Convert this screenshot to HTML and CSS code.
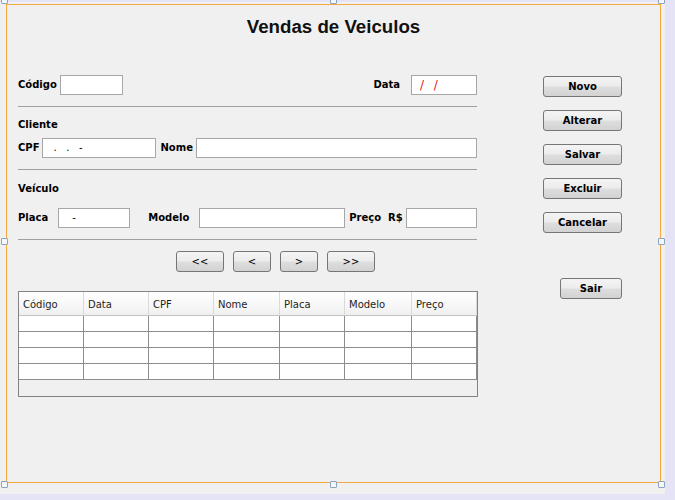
FILE: index.html
```html
<!DOCTYPE html>
<html lang="pt">
<head>
<meta charset="utf-8">
<title>Vendas de Veiculos</title>
<link rel="stylesheet" href="styles.css">
</head>
<body>
<div class="outer">
  <div class="panel">
    <h1 class="title">Vendas de Veiculos</h1>
    <div class="main">
      <div class="left">
        <div class="row spread">
          <div class="group">
            <span class="lbl">Código</span>
            <div class="field w-codigo ml-3"></div>
          </div>
          <div class="group">
            <span class="lbl">Data</span>
            <div class="field w-data ml-11"><span class="mask red">/ /</span></div>
          </div>
        </div>
        <div class="sep"></div>
        <div class="section">Cliente</div>
        <div class="row mt-6">
          <span class="lbl">CPF</span>
          <div class="field w-cpf ml-2"><span class="mask cpf">.&nbsp;&nbsp;&nbsp;.&nbsp;&nbsp;&nbsp;-</span></div>
          <span class="lbl ml-5">Nome</span>
          <div class="field grow ml-3"></div>
        </div>
        <div class="sep"></div>
        <div class="section mt-12">Veículo</div>
        <div class="row mt-12">
          <span class="lbl">Placa</span>
          <div class="field w-placa ml-10"><span class="mask placa">-</span></div>
          <span class="lbl ml-18">Modelo</span>
          <div class="field w-modelo ml-10"></div>
          <span class="lbl ml-4">Preço&nbsp;&nbsp;R$</span>
          <div class="field grow ml-3"></div>
        </div>
        <div class="sep"></div>
        <div class="nav">
          <button class="btn w-48">&lt;&lt;</button>
          <button class="btn w-38">&lt;</button>
          <button class="btn w-38">&gt;</button>
          <button class="btn w-48">&gt;&gt;</button>
        </div>
        <div class="table">
          <div class="grid">
            <div class="th">Código</div>
            <div class="th">Data</div>
            <div class="th">CPF</div>
            <div class="th">Nome</div>
            <div class="th">Placa</div>
            <div class="th">Modelo</div>
            <div class="th">Preço</div>
            <div class="td"></div><div class="td"></div><div class="td"></div><div class="td"></div><div class="td"></div><div class="td"></div><div class="td"></div>
            <div class="td"></div><div class="td"></div><div class="td"></div><div class="td"></div><div class="td"></div><div class="td"></div><div class="td"></div>
            <div class="td"></div><div class="td"></div><div class="td"></div><div class="td"></div><div class="td"></div><div class="td"></div><div class="td"></div>
            <div class="td"></div><div class="td"></div><div class="td"></div><div class="td"></div><div class="td"></div><div class="td"></div><div class="td"></div>
          </div>
        </div>
      </div>
      <div class="right">
        <button class="btn bold side">Novo</button>
        <button class="btn bold side">Alterar</button>
        <button class="btn bold side">Salvar</button>
        <button class="btn bold side">Excluir</button>
        <button class="btn bold side">Cancelar</button>
        <button class="btn bold sair">Sair</button>
      </div>
    </div>
  </div>
</div>
<span class="handle h-tl"></span>
<span class="handle h-tc"></span>
<span class="handle h-tr"></span>
<span class="handle h-ml"></span>
<span class="handle h-mr"></span>
<span class="handle h-bl"></span>
<span class="handle h-bc"></span>
<span class="handle h-br"></span>
</body>
</html>
```
FILE: styles.css
```css
html, body {
  margin: 0;
  padding: 0;
}
body {
  width: 675px;
  height: 500px;
  overflow: hidden;
  position: relative;
  background: #e4e4f6;
  font-family: "DejaVu Sans", "Liberation Sans", sans-serif;
  font-size: 10px;
  color: #000;
}
.outer {
  margin-top: 2px;
  width: 665px;
  height: 492px;
  box-sizing: border-box;
  padding: 2px 0 0 6px;
  background: #f0f0f0;
}
.panel {
  width: 655px;
  height: 479px;
  box-sizing: border-box;
  border: 1px solid #f4a940;
  background: #f0f0f0;
}
.title {
  margin: 0;
  padding-top: 11px;
  height: 22px;
  line-height: 22px;
  text-align: center;
  font-family: "Liberation Sans", Arial, sans-serif;
  font-weight: bold;
  font-size: 18.7px;
  color: #111;
}
.main {
  display: flex;
  margin-top: 37px;
  padding-left: 11px;
}
.left {
  width: 459px;
}
.right {
  margin-left: 66px;
  padding-top: 1px;
  display: flex;
  flex-direction: column;
  gap: 13px;
  align-items: flex-start;
}
.row {
  display: flex;
  align-items: center;
  height: 20px;
}
.spread {
  justify-content: space-between;
}
.group {
  display: flex;
  align-items: center;
}
.lbl {
  font-weight: bold;
  white-space: nowrap;
  line-height: 14px;
}
.field {
  height: 20px;
  box-sizing: border-box;
  border: 1px solid #a7a7a7;
  background: #fff;
  display: flex;
  align-items: center;
  font-size: 10px;
  white-space: nowrap;
}
.grow { flex: 1; }
.w-codigo { width: 63px; }
.w-data { width: 66px; }
.w-cpf { width: 114px; }
.w-placa { width: 72px; }
.w-modelo { width: 146px; }
.ml-2 { margin-left: 2px; }
.ml-3 { margin-left: 3px; }
.ml-4 { margin-left: 4px; }
.ml-5 { margin-left: 5px; }
.ml-10 { margin-left: 10px; }
.ml-11 { margin-left: 11px; }
.ml-18 { margin-left: 18px; }
.mt-6 { margin-top: 6px; }
.mt-12 { margin-top: 12px; }
.mask { line-height: 14px; }
.red {
  color: #e3141e;
  font-size: 12px;
  padding-left: 8px;
  letter-spacing: 3px;
}
.cpf { padding-left: 11px; }
.placa { padding-left: 13px; }
.sep {
  height: 1px;
  margin-top: 11px;
  background: #a0a0a0;
}
.section {
  margin-top: 11px;
  height: 14px;
  line-height: 14px;
  font-weight: bold;
}
.section.mt-12 { margin-top: 12px; }
.nav {
  display: flex;
  gap: 9px;
  margin-top: 11px;
  padding-left: 158px;
}
.btn {
  height: 21px;
  box-sizing: border-box;
  border: 1px solid #767676;
  border-radius: 3px;
  background: linear-gradient(to bottom, #f4f4f4 0%, #ececec 48%, #dedede 52%, #d2d2d2 100%);
  font-family: "DejaVu Sans", sans-serif;
  font-size: 10px;
  color: #000;
  padding: 0;
  margin: 0;
  line-height: 18px;
  text-align: center;
}
.bold { font-weight: bold; }
.w-48 { width: 48px; }
.w-38 { width: 38px; }
.side { width: 79px; }
.sair {
  width: 62px;
  margin-left: 17px;
  margin-top: 32px;
}
.table {
  margin-top: 19px;
  width: 460px;
  height: 106px;
  box-sizing: border-box;
  border: 1px solid #828282;
  background: #f0f0f0;
}
.grid {
  display: grid;
  grid-template-columns: 65px 65px 65px 66px 65px 67px 65px;
  grid-auto-rows: 16px;
  grid-template-rows: 24px;
}
.th {
  box-sizing: border-box;
  height: 24px;
  line-height: 25px;
  padding-left: 4px;
  border-right: 1px solid #dadada;
  border-bottom: 1px solid #c4c4c4;
  background: linear-gradient(to bottom, #ffffff 0%, #f7f7f7 60%, #efefef 100%);
  color: #1e1e1e;
  white-space: nowrap;
}
.td {
  box-sizing: border-box;
  height: 16px;
  background: #fff;
  border-right: 1px solid #8c8c8c;
  border-bottom: 1px solid #8c8c8c;
}
.handle {
  position: absolute;
  width: 5px;
  height: 5px;
  border: 1px solid #8ea4bc;
  background: #f4f8fc;
  border-radius: 1px;
}
.h-tl { left: 1px; top: -3px; }
.h-tc { left: 330px; top: -3px; }
.h-tr { left: 658px; top: -3px; }
.h-ml { left: 1px; top: 238px; }
.h-mr { left: 658px; top: 238px; }
.h-bl { left: 1px; top: 481px; }
.h-bc { left: 330px; top: 481px; }
.h-br { left: 658px; top: 481px; }
```
